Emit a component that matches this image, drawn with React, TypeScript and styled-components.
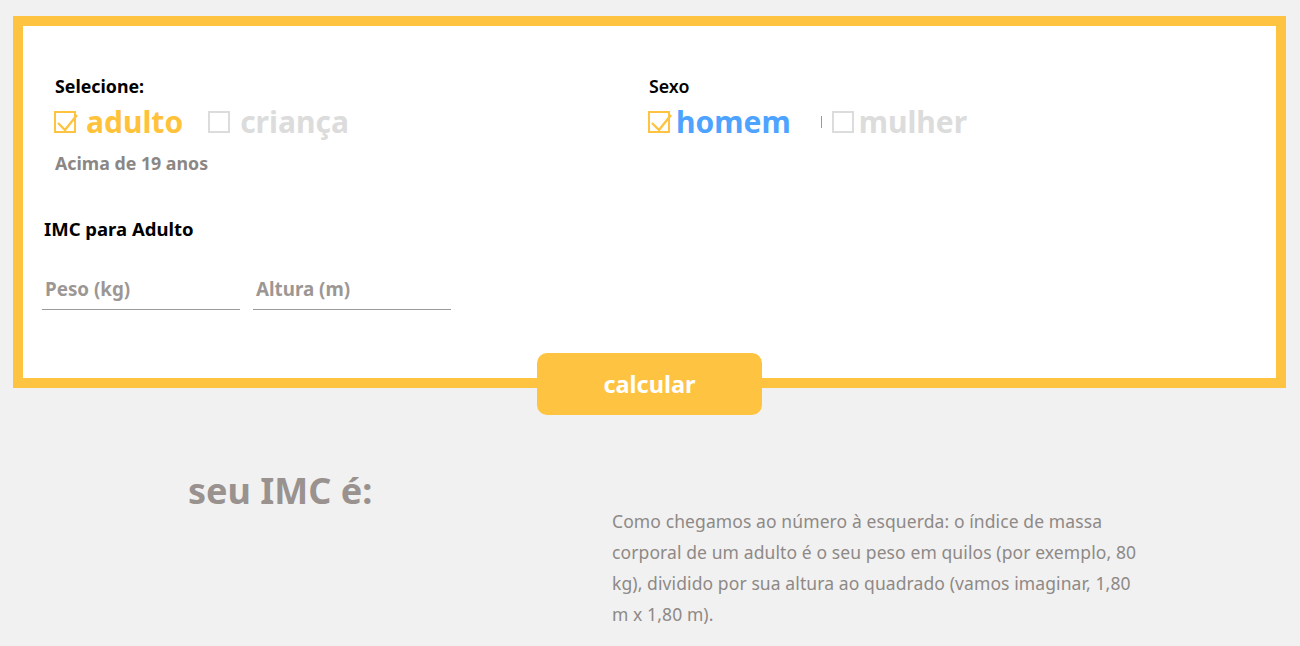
import React from "react";
import styled, { createGlobalStyle } from "styled-components";

const Global = createGlobalStyle`
  html, body { margin: 0; padding: 0; background: #f1f1f1; }
  body { font-family: "Noto Sans", "Open Sans", sans-serif; }
  * { box-sizing: border-box; }
`;

const YELLOW = "#ffc342";

const Page = styled.div`
  width: 1300px;
  padding: 16px 14px 0 13px;
`;

const Card = styled.section`
  height: 372px;
  border: 10px solid ${YELLOW};
  background: #fff;
`;

const TopRow = styled.div`
  display: grid;
  grid-template-columns: 594px 1fr;
  padding: 50px 0 0 31px;
`;

const Column = styled.div`
  display: flex;
  flex-direction: column;
`;

const Label = styled.div<{ $weight?: number }>`
  font-size: 17.8px;
  line-height: 20px;
  font-weight: ${(p) => p.$weight ?? 700};
  color: #000;
  margin-left: 1px;
`;

const OptionRow = styled.div`
  display: flex;
  align-items: center;
  height: 36px;
  margin-top: 8px;
`;

const Option = styled.label<{ $gap: number; $after: number }>`
  display: flex;
  align-items: center;
  gap: ${(p) => p.$gap}px;
  margin-right: ${(p) => p.$after}px;
  cursor: pointer;
`;

const Box = styled.span<{ $on?: boolean }>`
  position: relative;
  width: 22px;
  height: 22px;
  border: 2px solid ${(p) => (p.$on ? YELLOW : "#dcdcdc")};
  flex: none;
`;

const Tick = styled.svg`
  position: absolute;
  left: -2px;
  top: -3px;
`;

const OptionText = styled.span<{ $color: string }>`
  font-size: 30px;
  line-height: 36px;
  font-weight: 700;
  color: ${(p) => p.$color};
`;

const Divider = styled.span`
  width: 1px;
  height: 12px;
  background: #999;
  margin-right: 10px;
`;

const Hint = styled.div`
  margin-top: 12px;
  margin-left: 1px;
  font-size: 17.8px;
  line-height: 22px;
  font-weight: 700;
  color: #8a8785;
`;

const FormSection = styled.div`
  padding: 44px 0 0 19px;
`;

const FormTitle = styled.h2`
  margin: 0 0 0 2px;
  font-size: 18.5px;
  line-height: 22px;
  font-weight: 700;
  color: #000;
`;

const Inputs = styled.div`
  display: flex;
  gap: 13px;
  margin-top: 30px;
`;

const Field = styled.input`
  width: 198px;
  height: 40px;
  border: none;
  border-bottom: 1px solid #9a9a9a;
  padding: 0 3px 2px;
  font-family: inherit;
  font-size: 18.8px;
  font-weight: 700;
  color: #555;
  background: transparent;
  outline: none;
  &::placeholder { color: #9c9794; }
`;

const ButtonRow = styled.div`
  display: flex;
  justify-content: center;
  margin-top: -35px;
`;

const CalcButton = styled.button`
  width: 225px;
  height: 62px;
  border: none;
  border-radius: 10px;
  background: ${YELLOW};
  color: #fff;
  font-family: inherit;
  font-size: 23.5px;
  font-weight: 700;
  cursor: pointer;
`;

const Result = styled.div`
  display: flex;
  padding-left: 175px;
`;

const ResultTitle = styled.h1`
  width: 424px;
  margin: 56px 0 0;
  font-size: 36px;
  line-height: 40px;
  font-weight: 700;
  color: #99928f;
`;

const Explanation = styled.p`
  margin: 91px 0 0;
  font-size: 17.5px;
  line-height: 31px;
  letter-spacing: 0.1px;
  color: #8e8986;
  white-space: nowrap;
`;

const Check = ({ on }: { on?: boolean }) => (
  <Box $on={on}>
    {on && (
      <Tick width="26" height="26" viewBox="0 0 26 26">
        <path d="M4 13 L11 20 L23 5" fill="none" stroke={YELLOW} strokeWidth="2.4" />
      </Tick>
    )}
  </Box>
);

export default function App() {
  return (
    <Page>
      <Global />
      <Card>
        <TopRow>
          <Column>
            <Label>Selecione:</Label>
            <OptionRow>
              <Option $gap={10} $after={25}>
                <Check on />
                <OptionText $color="#ffc23a">adulto</OptionText>
              </Option>
              <Option $gap={10} $after={0}>
                <Check />
                <OptionText $color="#dcdcdc">criança</OptionText>
              </Option>
            </OptionRow>
            <Hint>Acima de 19 anos</Hint>
          </Column>
          <Column>
            <Label $weight={600}>Sexo</Label>
            <OptionRow>
              <Option $gap={6} $after={30}>
                <Check on />
                <OptionText $color="#4da3ff">homem</OptionText>
              </Option>
              <Divider />
              <Option $gap={5} $after={0}>
                <Check />
                <OptionText $color="#dcdcdc">mulher</OptionText>
              </Option>
            </OptionRow>
          </Column>
        </TopRow>
        <FormSection>
          <FormTitle>IMC para Adulto</FormTitle>
          <Inputs>
            <Field placeholder="Peso (kg)" />
            <Field placeholder="Altura (m)" />
          </Inputs>
        </FormSection>
      </Card>
      <ButtonRow>
        <CalcButton>calcular</CalcButton>
      </ButtonRow>
      <Result>
        <ResultTitle>seu IMC é:</ResultTitle>
        <Explanation>
          Como chegamos ao número à esquerda: o índice de massa
          <br />
          corporal de um adulto é o seu peso em quilos (por exemplo, 80
          <br />
          kg), dividido por sua altura ao quadrado (vamos imaginar, 1,80
          <br />
          m x 1,80 m).
        </Explanation>
      </Result>
    </Page>
  );
}
